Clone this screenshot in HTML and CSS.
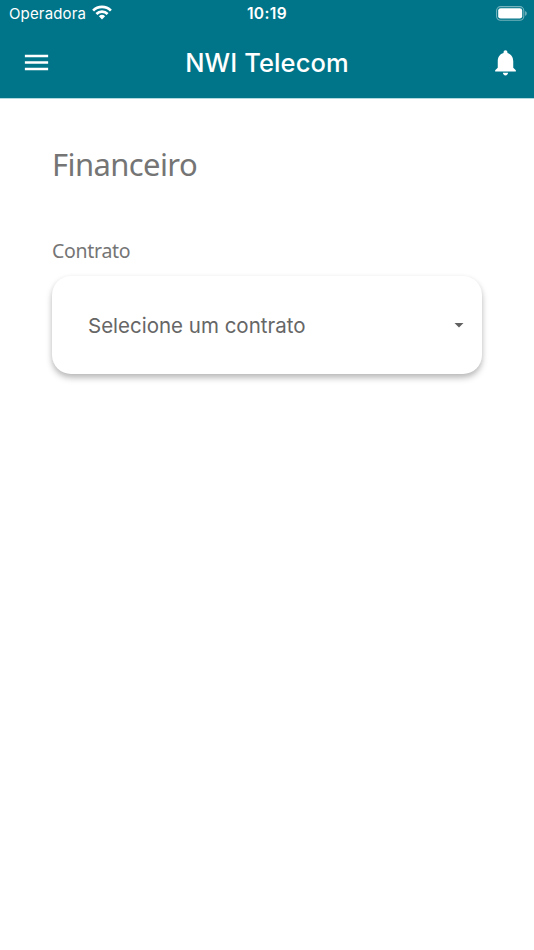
FILE: index.html
```html
<!DOCTYPE html>
<html lang="pt-BR">
<head>
<meta charset="utf-8">
<meta name="viewport" content="width=device-width, initial-scale=1">
<title>NWI Telecom</title>
<link rel="stylesheet" href="styles.css">
</head>
<body>
<header class="header">
  <div class="status">
    <div class="status-left">
      <span class="carrier">Operadora</span>
      <svg class="wifi" width="20" height="15" viewBox="0 0 20 15" fill="none" stroke="#fff" stroke-width="2.7">
        <path d="M1.1 5.6a12.6 12.6 0 0 1 17.8 0"/>
        <path d="M4.4 9a8 8 0 0 1 11.2 0"/>
        <path d="M10 14.4 6.9 11.3a4.5 4.5 0 0 1 6.2 0z" fill="#fff" stroke="none"/>
      </svg>
    </div>
    <span class="clock">10:19</span>
    <svg class="battery" width="31" height="15" viewBox="0 0 31 15">
      <rect x=".6" y=".6" width="27.2" height="13.6" rx="4" fill="none" stroke="#fff" stroke-opacity=".45" stroke-width="1.1"/>
      <rect x="2.2" y="2.2" width="24" height="10.4" rx="2.4" fill="#fff"/>
      <path d="M29.2 5.1c2 .9 2 3.700 0 4.600z" fill="#fff" fill-opacity=".5"/>
    </svg>
  </div>
  <div class="appbar">
    <svg class="icon" viewBox="0 0 24 24"><path d="M3 18h18v-2H3v2zm0-5h18v-2H3v2zm0-7v2h18V6H3z"/></svg>
    <h1 class="title">NWI Telecom</h1>
    <svg class="icon icon-end" viewBox="0 0 24 24"><path d="M12 22c1.100 0 2-.9 2-2h-4c0 1.100.89 2 2 2zm6-6v-5c0-3.070-1.640-5.640-4.500-6.320V4c0-.83-.67-1.500-1.500-1.500s-1.500.67-1.500 1.500v.68C7.630 5.360 6 7.920 6 11v5l-2 2v1h16v-1l-2-2z"/></svg>
  </div>
</header>
<main class="content">
  <h2 class="heading">Financeiro</h2>
  <div class="label">Contrato</div>
  <div class="select" role="button">
    <span class="placeholder">Selecione um contrato</span>
    <svg class="caret" width="10" height="5" viewBox="0 0 10 5"><path d="M.5 0h9L5 4.500z"/></svg>
  </div>
</main>
</body>
</html>
```
FILE: styles.css
```css
* { box-sizing: border-box; }
body {
  margin: 0;
  min-height: 950px;
  background: #fff;
  font-family: Inter, "Liberation Sans", sans-serif;
}
.header {
  height: 99px;
  background: #007589;
  color: #fff;
  border-bottom: 1px solid #b0d8df;
}
.status {
  height: 27px;
  padding: 0 7px 0 9px;
  display: grid;
  grid-template-columns: 1fr auto 1fr;
  align-items: center;
}
.status-left { display: flex; align-items: center; gap: 6px; }
.wifi { margin-bottom: 2px; }
.carrier { font-size: 15px; line-height: 27px; letter-spacing: 0.15px; }
.clock { font-size: 15.5px; line-height: 27px; font-weight: 600; letter-spacing: 0.4px; margin-left: -2px; }
.battery { justify-self: end; margin-bottom: 1px; }
.appbar {
  height: 70px;
  padding: 0 13px 0 21px;
  display: grid;
  grid-template-columns: 1fr auto 1fr;
  align-items: center;
}
.icon { width: 31px; height: 31px; fill: #fff; }
.icon-end { justify-self: end; }
.title {
  margin: 0 0 0 -8px;
  padding-top: 1px;
  font-size: 25.5px;
  line-height: 32px;
  font-weight: 500;
  letter-spacing: 0.1px;
}
.content { padding: 44px 52px 0; color: #757575; }
.heading {
  margin: 0;
  font: 400 31px/42px "Noto Sans", sans-serif;
  letter-spacing: -0.6px;
}
.label {
  margin-top: 52px;
  font: 400 19.5px/28px "Noto Sans", sans-serif;
  letter-spacing: -0.3px;
}
.select {
  height: 98px;
  margin-top: 11.4px;
  padding: 1px 18px 0 36px;
  display: flex;
  align-items: center;
  justify-content: space-between;
  border-radius: 19px;
  background: #fff;
  box-shadow: 0 4px 6px rgba(0, 0, 0, .25), 0 1px 5px rgba(0, 0, 0, .05);
}
.placeholder { font-size: 20.5px; line-height: 28px; color: #666; }
.caret { fill: #616161; }
```
